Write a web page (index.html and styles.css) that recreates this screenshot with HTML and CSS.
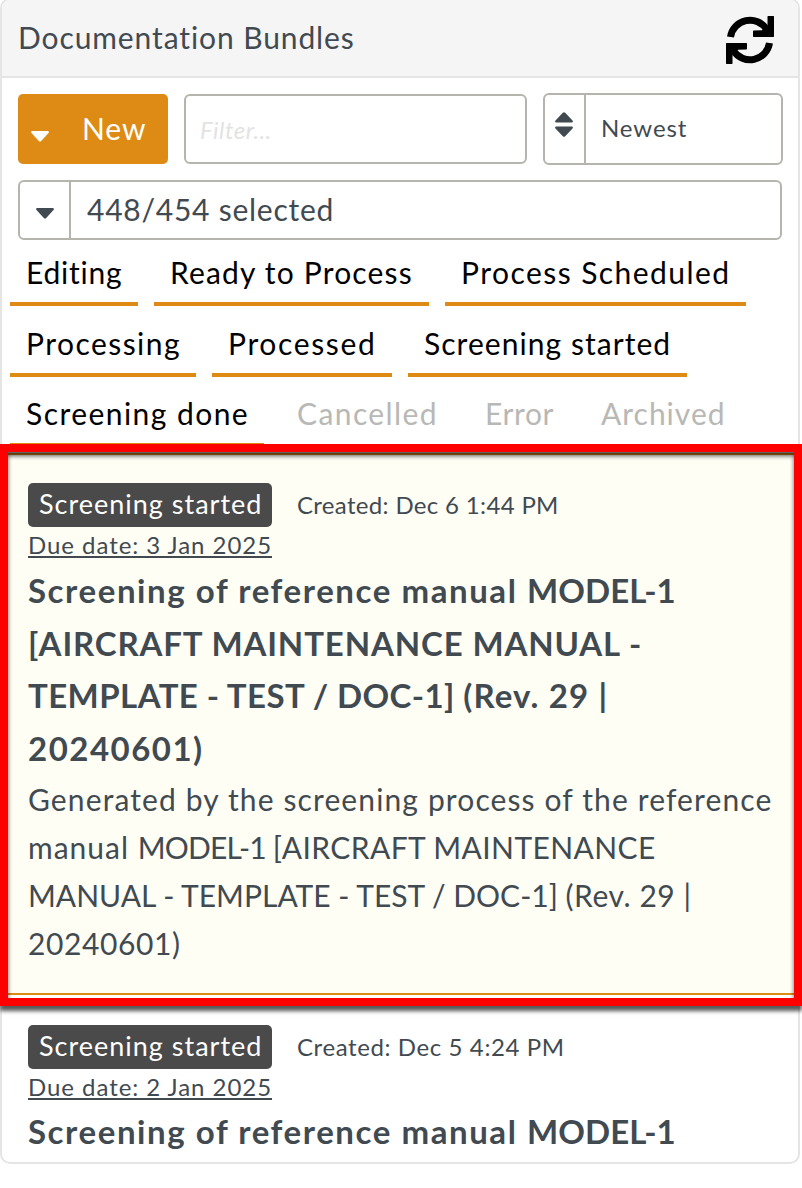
FILE: index.html
```html
<!DOCTYPE html>
<html lang="en">
<head>
<meta charset="utf-8">
<title>Documentation Bundles</title>
<link rel="stylesheet" href="styles.css">
</head>
<body>
<section class="panel">
  <header class="panel-header">
    <h1 class="panel-title">Documentation Bundles</h1>
    <svg class="refresh" viewBox="0 0 48 48" width="48" height="48">
      <g id="half">
        <path d="M4.5 21A19.7 19.7 0 0 1 40.6 13.4" fill="none" stroke="#000" stroke-width="7"/>
        <path d="M42 0H47.5L48 .5V20.5L47.5 21H27.5L27 20.5V15L27.5 14.5L36 14.2L41.5 10V.5Z"/>
      </g>
      <use href="#half" transform="rotate(180 24 24)"/>
    </svg>
  </header>

  <div class="toolbar">
    <button class="new-button">
      <svg class="new-caret" viewBox="0 0 18 11" width="18" height="11"><path d="M1 0H17Q18.6 .8 17.5 2L10.2 10Q9 11 7.8 10L.5 2Q-.6 .8 1 0Z" fill="currentColor"/></svg>
      <span>New</span>
    </button>
    <div class="filter">Filter...</div>
    <div class="sort">
      <div class="sort-icon">
        <svg viewBox="0 0 18 25" width="18" height="25"><path d="M1 10.5H17Q18.6 9.7 17.5 8.5L10.2 .8Q9 -.4 7.8 .8L.5 8.5Q-.6 9.7 1 10.5ZM1 14.5H17Q18.6 15.3 17.5 16.5L10.2 24.2Q9 25.4 7.8 24.2L.5 16.5Q-.6 15.3 1 14.5Z" fill="currentColor"/></svg>
      </div>
      <div class="sort-value">Newest</div>
    </div>
  </div>

  <div class="status-select">
    <div class="status-caret">
      <svg viewBox="0 0 18 11" width="18" height="11"><path d="M1 0H17Q18.6 .8 17.5 2L10.2 10Q9 11 7.8 10L.5 2Q-.6 .8 1 0Z" fill="currentColor"/></svg>
    </div>
    <div class="status-value">448/454 selected</div>
  </div>

  <nav class="tabs">
    <div class="tab editing">Editing</div>
    <div class="tab ready">Ready to Process</div>
    <div class="tab scheduled">Process Scheduled</div>
    <div class="tab processing">Processing</div>
    <div class="tab processed">Processed</div>
    <div class="tab started">Screening started</div>
    <div class="tab done">Screening done</div>
    <div class="tab off cancelled">Cancelled</div>
    <div class="tab off error">Error</div>
    <div class="tab off archived">Archived</div>
  </nav>

  <div class="bundles">
    <article class="bundle selected">
      <div class="meta"><span class="badge">Screening started</span><span class="created">Created: Dec 6 1:44 PM</span></div>
      <div class="due"><span>Due date: 3 Jan 2025</span></div>
      <h2 class="name">
        <span class="n1">Screening of reference manual <b class="model">MODEL-1</b></span>
        <span class="n2">[AIRCRAFT MAINTENANCE MANUAL -</span>
        <span class="n3">TEMPLATE - TEST / DOC-1] <b class="rev">(Rev. 29 |</b></span>
        <span class="n4">20240601)</span>
      </h2>
      <p class="description">
        <span class="d1">Generated by the screening process of the reference</span>
        <span class="d2">manual <i class="model">MODEL-1 </i><i class="manual">[AIRCRAFT MAINTENANCE</i></span>
        <span class="d3">MANUAL - TEMPLATE - TEST / DOC-1] <i class="rev">(Rev. 29 |</i></span>
        <span class="d4">20240601)</span>
      </p>
    </article>
    <article class="bundle">
      <div class="meta"><span class="badge">Screening started</span><span class="created later">Created: Dec 5 4:24 PM</span></div>
      <div class="due"><span>Due date: 2 Jan 2025</span></div>
      <h2 class="name short"><span class="n1">Screening of reference manual <b class="model">MODEL-1</b></span></h2>
    </article>
  </div>
</section>
<div class="highlight"></div>
</body>
</html>
```

FILE: styles.css
```css
* { box-sizing: border-box; }

body {
  margin: 0;
  height: 1188px;
  overflow: hidden;
  background: #fff;
  color: #414a51;
  font-family: Lato, "Open Sans", sans-serif;
  font-size: 30px;
  white-space: nowrap;
}

.panel {
  width: 800px;
  height: 1166px;
  margin-top: -2px;
  border: 2px solid #e5e5e5;
  border-radius: 10px;
  overflow: hidden;
}

.panel-header {
  display: flex;
  justify-content: space-between;
  height: 78px;
  padding: 0 24px 0 16px;
  background: #f5f5f5;
  border-bottom: 2px solid #e5e5e5;
}

.panel-title {
  margin: 0;
  font-size: 30px;
  font-weight: 400;
  line-height: 75px;
  letter-spacing: 0.9px;
}

.refresh { margin-top: 16px; }

/* Toolbar */
.toolbar {
  display: flex;
  align-items: center;
  gap: 16px;
  padding: 15px 15px 0 16px;
}

.new-button {
  display: flex;
  width: 150px;
  height: 70px;
  padding: 0 0 0 13px;
  border: 0;
  border-radius: 5px;
  background: #dd8b14;
  color: #fff;
  font: inherit;
  line-height: 68px;
  letter-spacing: 0.9px;
}

.new-caret { margin: 37px 33px 0 0; }

.filter {
  width: 343px;
  height: 70px;
  padding-left: 14px;
  border: 2px solid #b5b5ad;
  border-radius: 6px;
  color: #e3e3e3;
  font-size: 24px;
  font-style: italic;
  line-height: 68px;
  letter-spacing: 0.5px;
}

.sort {
  display: flex;
  width: 240px;
  height: 72px;
  border: 2px solid #b5b5ad;
  border-radius: 6px;
  font-size: 24px;
  line-height: 65px;
  letter-spacing: 0.9px;
}

.sort-icon {
  display: flex;
  width: 41px;
  padding: 17px 0 0 10px;
  border-right: 2px solid #b5b5ad;
}

.sort-value { padding-left: 15px; }

.status-select {
  display: flex;
  width: 764px;
  height: 60px;
  margin: 15px 0 0 16px;
  border: 2px solid #b5b5ad;
  border-radius: 6px;
  line-height: 55px;
  letter-spacing: 0.75px;
}

.status-caret {
  display: flex;
  width: 51px;
  padding: 26px 0 0 16px;
  border-right: 2px solid #b5b5ad;
}

.status-value { padding-left: 16px; }

/* Status tabs */
.tabs {
  display: flex;
  flex-wrap: wrap;
  gap: 14.6px 16px;
  padding: 10px 8px 0;
  color: #000;
}

.tab {
  height: 56px;
  padding-left: 16px;
  border-bottom: 4px solid #dd8b14;
  line-height: 45px;
}

.off { border-color: transparent; color: #b8b8b5; }
.editing { width: 128px; letter-spacing: 0.75px; }
.ready { width: 275px; letter-spacing: 1.18px; }
.scheduled { width: 301px; letter-spacing: 1.45px; }
.processing { width: 186px; letter-spacing: 1.45px; }
.processed { width: 180px; letter-spacing: 1.65px; }
.started { width: 279px; letter-spacing: 1.05px; }
.done { width: 254px; letter-spacing: 1.45px; }
.cancelled { width: 173px; padding-left: 17px; letter-spacing: 1.4px; }
.error { width: 100px; letter-spacing: 0.6px; }
.archived { width: 156px; letter-spacing: 1px; }

/* Bundle list */
.bundles { margin-top: 6px; }

.bundle { padding: 30px 26px 0; }

.selected {
  height: 542px;
  padding-top: 28px;
  border: solid #dd8b14;
  border-width: 2px 0;
  background: #fffef5;
}

.meta {
  display: flex;
  align-items: baseline;
  gap: 25px;
  height: 44px;
}

.badge {
  width: 244px;
  height: 44px;
  padding-left: 11px;
  border-radius: 5px;
  background: #4a4a4a;
  color: #fff;
  font-size: 27px;
  line-height: 42px;
  letter-spacing: 1px;
}

.created { font-size: 24px; letter-spacing: 0.33px; }
.later { letter-spacing: 0.6px; }

.due {
  height: 37px;
  font-size: 24px;
  line-height: 36px;
  letter-spacing: 0.95px;
}

.due span {
  text-decoration: underline;
  text-decoration-thickness: 2px;
  text-decoration-skip-ink: none;
  text-underline-offset: 2px;
}

.name {
  margin: 0;
  font-size: 33px;
  font-weight: 700;
  line-height: 52.5px;
}

.short { line-height: 51px; }

.description { margin: 1px 0 0; line-height: 48px; }

.name span,
.description span { display: block; }

.name b { font-weight: 700; }
.description i { font-style: normal; }

.n1 { letter-spacing: 1.57px; }
.n1 .model { letter-spacing: 0.05px; }
.n2 { letter-spacing: 0.86px; }
.n3 { letter-spacing: 0.42px; }
.n3 .rev { letter-spacing: 1.15px; }
.n4 { letter-spacing: 1.5px; }
.d1 { letter-spacing: 1.12px; }
.d2 { letter-spacing: 1px; }
.d2 .model { letter-spacing: -0.8px; }
.d2 .manual { letter-spacing: 0.4px; }
.d3 { letter-spacing: 0; }
.d3 .rev { letter-spacing: 0.55px; }
.d4 { letter-spacing: 0.6px; }

/* Callout frame laid over the selected bundle */
.highlight {
  position: absolute;
  top: 444px;
  left: 0;
  width: 802px;
  height: 562px;
  border: 8px solid #f00;
  box-shadow: 0 5px 4px rgba(0, 0, 0, 0.65), inset 0 4px 4px rgba(0, 0, 0, 0.65);
}
```
